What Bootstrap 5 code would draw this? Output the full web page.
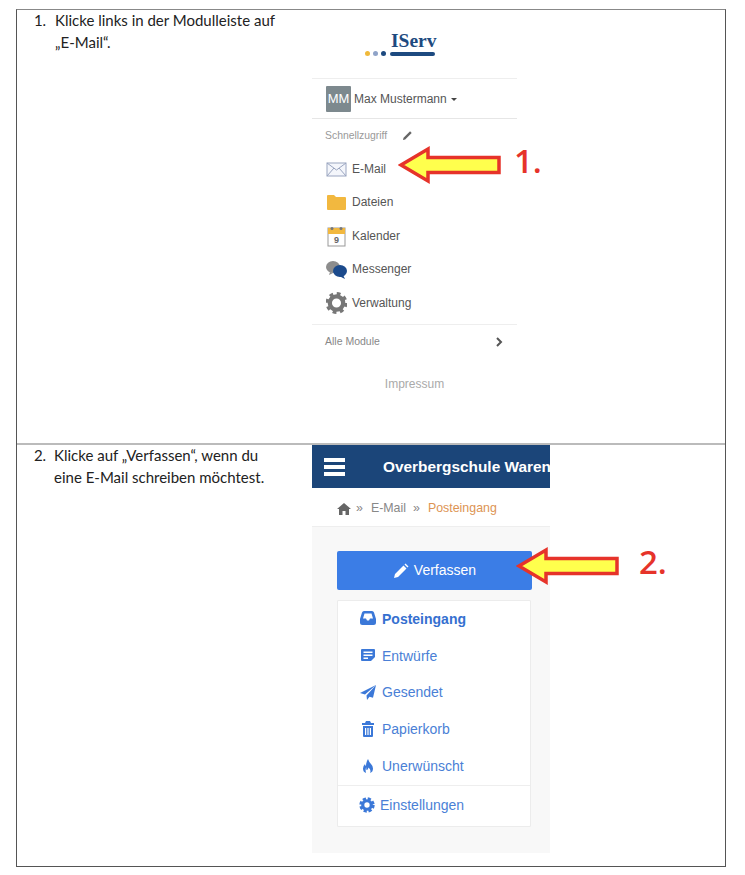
<!DOCTYPE html>
<html lang="de">
<head>
  <meta charset="UTF-8" />
  <meta name="viewport" content="width=device-width, initial-scale=1" />
  <title>E-Mail verfassen</title>
  <link href="https://cdn.jsdelivr.net/npm/bootstrap@5.3.2/dist/css/bootstrap.min.css" rel="stylesheet" />
  <style>
    body { background: #fff; }
    .sheet { position: relative; width: 710px; margin: 9px 0 0 16px; border: 1px solid #555; border-top-color: #888; font-family: Lato, sans-serif; }
    .step-row { display: flex; }
    .step-one { height: 435px; border-bottom: 2px solid #bbb; }
    .step-two { height: 421px; }
    .step-text { width: 295px; font-size: 15px; line-height: 21.5px; color: #222; margin: 0; padding: 0 28px 0 33px; }
    .step-two .step-text { padding-top: 0; padding-right: 24px; }
    .step-text li { padding-left: 5px; }
    .step-two .step-text li { padding-left: 4px; }

    /* Modulleiste */
    .side-panel { width: 205px; font-family: "Liberation Sans", sans-serif; color: #555; font-size: 12px; }
    .logo-box { height: 68px; padding-top: 21px; }
    .logo-text { font-family: "Liberation Serif", serif; font-size: 19.5px; font-weight: 700; line-height: 20px; color: #1d4a80; padding-left: 79px; }
    .logo-line { gap: 3px; padding-left: 53px; }
    .logo-dot { width: 5px; height: 5px; border-radius: 50%; }
    .logo-bar { width: 45px; height: 4px; border-radius: 2px; background: #1d4a80; margin-left: 1px; }
    .user-row { height: 41px; border-top: 1px solid #eee; border-bottom: 1px solid #e6e6e6; padding: 1px 0 0 14px; gap: 3px; font-size: 12px; }
    .avatar { width: 25px; height: 26px; background: #7d898e; color: #fff; font-size: 13px; border-radius: 1px; }
    .caret-down { width: 0; height: 0; border: 3.5px solid transparent; border-top-color: #444; border-bottom: 0; margin-left: 1px; }
    .quick-head { height: 33px; padding-left: 13px; gap: 15px; font-size: 10.4px; color: #999; }
    .module-row { height: 33.5px; padding-left: 14px; gap: 5px; }
    .module-row svg { width: 21px; height: 22px; flex: none; }
    .more-row { height: 35px; margin-top: 4px; border-top: 1px solid #eee; padding: 0 14px 0 13px; font-size: 10.5px; color: #888; }
    .impress { text-align: center; color: #aaa; font-size: 12px; margin-top: 16px; }

    /* E-Mail Ansicht */
    .mail-panel { width: 238px; height: 408px; background: #f8f8f8; font-family: "Liberation Sans", sans-serif; }
    .top-bar { height: 43px; background: #1b4579; color: #fff; padding-left: 12px; font-weight: 700; font-size: 15.4px; white-space: nowrap; overflow: hidden; }
    .burger { width: 21px; flex: none; margin-right: 38px; }
    .burger span { display: block; height: 4px; background: #fff; margin: 3px 0; }
    .crumb { height: 39px; background: #fff; border-bottom: 1px solid #eee; padding: 3px 0 0 25px; gap: 5px; font-size: 12.4px; color: #888; }
    .crumb .now { color: #dd9454; margin-left: 3px; }
    .crumb .sep { margin: 0 2px 0 3px; }
    .write-btn { display: flex; width: 195px; height: 39px; margin: 24px 0 0 25px; background: #3b7de6; border: 0; border-radius: 2px; font-size: 14px; gap: 5px; }
    .folder-box { width: 194px; margin: 10px 0 0 25px; border: 1px solid #ececec; border-radius: 1px; overflow: hidden; }
    .folder-box .list-group-item { border: 0; height: 36.8px; padding: 0 0 0 22px; gap: 6px; color: #4a7fd6; font-size: 14px; background: #fff; }
    .folder-box .list-group-item svg { width: 16px; height: 16px; flex: none; fill: #3b78d8; margin-top: -2px; }
    .folder-box .active-folder { color: #3570d0; font-weight: 700; }
    .folder-box .settings-item { height: 41px; border-top: 1px solid #eee; padding-left: 21px; gap: 5px; }

    /* Pfeile */
    .mark-arrow { position: absolute; }
    .arrow-one { left: 381px; top: 134px; width: 104px; height: 42px; }
    .arrow-two { left: 499px; top: 535px; width: 104px; height: 42px; }
    .step-num { position: absolute; color: #e6332a; font-size: 33px; line-height: 32px; font-weight: 600; font-family: "Open Sans", sans-serif; }
    .num-one { left: 497px; top: 135px; }
    .num-two { left: 622px; top: 536px; }
  </style>
</head>
<body>
  <div class="sheet">
    <div class="step-row step-one">
      <ol class="step-text"><li>Klicke links in der Modulleiste auf „E-Mail“.</li></ol>
      <div class="side-panel">
        <div class="logo-box">
          <div class="logo-text">IServ</div>
          <div class="logo-line d-flex align-items-center">
            <span class="logo-dot" style="background:#f0b93a"></span>
            <span class="logo-dot" style="background:#8fa3c8"></span>
            <span class="logo-dot" style="background:#1d4a80"></span>
            <span class="logo-bar"></span>
          </div>
        </div>
        <div class="user-row d-flex align-items-center">
          <span class="avatar d-flex align-items-center justify-content-center">MM</span>
          <span>Max Mustermann</span><span class="caret-down"></span>
        </div>
        <div class="quick-head d-flex align-items-center">
          <span>Schnellzugriff</span>
          <svg width="11" height="11" viewBox="0 0 12 12"><path d="M1 11l.7-2.500L8.800 1.400l1.800 1.800L3.500 10.300z" fill="#666"/></svg>
        </div>
        <div class="module-row d-flex align-items-center">
          <svg viewBox="0 0 21 22"><rect x="1" y="5" width="19" height="13" fill="#f4f6fb" stroke="#9aa5c0"/><path d="M1 5l9.500 7L20 5M1 18l7-8M20 18l-7-8" fill="none" stroke="#9aa5c0"/></svg>
          <span>E-Mail</span>
        </div>
        <div class="module-row d-flex align-items-center">
          <svg viewBox="0 0 21 22"><path d="M1 5q0-1 1-1h6l2 2h9q1 0 1 1v11q0 1-1 1H2q-1 0-1-1z" fill="#f2b83f"/></svg>
          <span>Dateien</span>
        </div>
        <div class="module-row d-flex align-items-center">
          <svg viewBox="0 0 21 22"><rect x="2" y="3" width="17" height="18" fill="#fff" stroke="#999"/><rect x="2" y="3" width="17" height="6" fill="#f2b83f"/><circle cx="6" cy="3.500" r="1.500" fill="#777"/><circle cx="15" cy="3.500" r="1.500" fill="#777"/><text x="10.500" y="18" text-anchor="middle" font-size="9" font-weight="700" fill="#666" font-family="Liberation Sans">9</text></svg>
          <span>Kalender</span>
        </div>
        <div class="module-row d-flex align-items-center">
          <svg viewBox="0 0 21 22"><ellipse cx="7" cy="9" rx="7" ry="6" fill="#8d8d8d"/><path d="M4 14l-1 3 4-2z" fill="#8d8d8d"/><ellipse cx="14" cy="13" rx="7" ry="6" fill="#1b4a8c"/><path d="M17 17l2 4-6-3z" fill="#1b4a8c"/></svg>
          <span>Messenger</span>
        </div>
        <div class="module-row d-flex align-items-center">
          <svg viewBox="0 0 22 22"><circle cx="11" cy="11" r="7" fill="none" stroke="#777" stroke-width="4.500"/><circle cx="11" cy="11" r="10" fill="none" stroke="#777" stroke-width="3" stroke-dasharray="4 3.850"/></svg>
          <span>Verwaltung</span>
        </div>
        <div class="more-row d-flex align-items-center justify-content-between">
          <span>Alle Module</span>
          <svg width="8" height="10" viewBox="0 0 8 10"><path d="M2 1l4 4-4 4" fill="none" stroke="#555" stroke-width="2"/></svg>
        </div>
        <div class="impress">Impressum</div>
      </div>
    </div>
    <div class="step-row step-two">
      <ol class="step-text" start="2"><li>Klicke auf „Verfassen“, wenn du eine E-Mail schreiben möchtest.</li></ol>
      <div class="mail-panel">
        <div class="top-bar d-flex align-items-center">
          <div class="burger"><span></span><span></span><span></span></div>
          <span>Overbergschule Waren</span>
        </div>
        <div class="crumb d-flex align-items-center">
          <svg width="14" height="13" viewBox="0 0 14 13"><path d="M7 1L0 7h2v6h3.500V9h3v4H12V7h2z" fill="#666"/></svg>
          <span>»</span><span class="sep">E-Mail</span><span>»</span><span class="now">Posteingang</span>
        </div>
        <button class="btn btn-primary write-btn align-items-center justify-content-center">
          <svg width="16" height="16" viewBox="0 0 16 16"><path d="M1 15l1-4 8.500-8.500 3 3L5 14zM11.500 1.500l1-1 3 3-1 1z" fill="#fff"/></svg>
          <span>Verfassen</span>
        </button>
        <div class="folder-box list-group">
          <div class="list-group-item active-folder d-flex align-items-center">
            <svg viewBox="0 0 16 16"><path d="M4 1h8q1.500 0 2 1.500L16 9v3.500q0 2.500-2.500 2.500h-11Q0 15 0 12.500V9l2-6.500Q2.500 1 4 1zm.5 2.500L3 8.500h3l1 2h2l1-2h3l-1.500-5z" fill-rule="evenodd"/></svg>
            <span>Posteingang</span>
          </div>
          <div class="list-group-item d-flex align-items-center">
            <svg viewBox="0 0 16 16"><path d="M2 2h12q1 0 1 1v7l-4 4H2q-1 0-1-1V3q0-1 1-1zm1.500 2.500V6h9V4.500zm0 3V9h9V7.500zm0 3V12H8v-1.500z" fill-rule="evenodd"/></svg>
            <span>Entwürfe</span>
          </div>
          <div class="list-group-item d-flex align-items-center">
            <svg viewBox="0 0 16 16"><path d="M16 1L0 9l5 1.500zM16 1L6.500 11.500 7 16l2.500-3.200 3.500 1z"/></svg>
            <span>Gesendet</span>
          </div>
          <div class="list-group-item d-flex align-items-center">
            <svg viewBox="0 0 16 16"><path d="M6 0h4l1 2h3v2H2V2h3zM3 5h10v10q0 1-1 1H4q-1 0-1-1zm2 2v7h1.200V7zm2.400 0v7h1.200V7zm2.400 0v7H11V7z" fill-rule="evenodd"/></svg>
            <span>Papierkorb</span>
          </div>
          <div class="list-group-item d-flex align-items-center">
            <svg viewBox="0 0 16 16"><path d="M8 1q1 3 3 5t2 4.500Q13 14 10 15q1.500-3-1.500-5.500Q8 12 6.500 12 6 10.500 6.500 9 5 11 6 15 3 14 3 10.500 3 8 5 6q0 1.500 1 2Q6 4 8 1z"/></svg>
            <span>Unerwünscht</span>
          </div>
          <div class="list-group-item settings-item d-flex align-items-center">
            <svg viewBox="0 0 14 15"><circle cx="7" cy="7.500" r="4" fill="none" stroke="#3b78d8" stroke-width="3"/><circle cx="7" cy="7.500" r="6" fill="none" stroke="#3b78d8" stroke-width="2.400" stroke-dasharray="3 1.710"/></svg>
            <span>Einstellungen</span>
          </div>
        </div>
      </div>
    </div>

    <svg class="mark-arrow arrow-one" viewBox="0 0 104 42"><path d="M3 21L30 5v8.500h71v15H30V37z" fill="#ffff4d" stroke="#e6332a" stroke-width="3.500"/></svg>
    <svg class="mark-arrow arrow-two" viewBox="0 0 104 42"><path d="M3 21L30 5v8.500h71v15H30V37z" fill="#ffff4d" stroke="#e6332a" stroke-width="3.500"/></svg>
    <span class="step-num num-one">1.</span>
    <span class="step-num num-two">2.</span>
  </div>
  <script src="https://cdn.jsdelivr.net/npm/bootstrap@5.3.2/dist/js/bootstrap.bundle.min.js"></script>
</body>
</html>
